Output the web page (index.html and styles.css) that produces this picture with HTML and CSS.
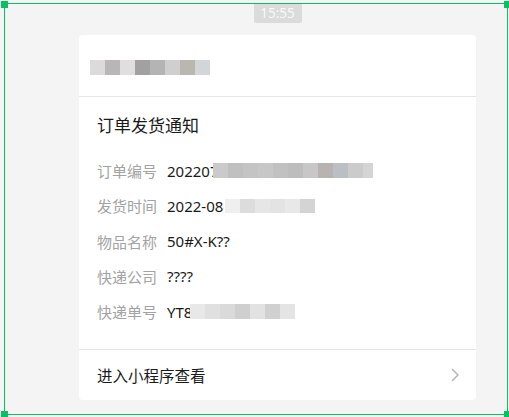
FILE: index.html
```html
<!DOCTYPE html>
<html lang="zh-CN">
<head>
    <meta charset="UTF-8">
    <title>订单发货通知</title>
    <meta name="viewport" content="width=device-width, initial-scale=1">
    <link rel="stylesheet" href="styles.css">
</head>
<body>
<div class="chat">
    <div class="time"><span>15:55</span></div>

    <div class="card">
        <div class="card-head">
            <span class="mosaic mosaic-name"></span>
        </div>
        <div class="card-body">
            <div class="title">订单发货通知</div>
            <div class="row">
                <span class="label">订单编号</span>
                <span class="value">202207</span><span class="mosaic mosaic-order"></span>
            </div>
            <div class="row">
                <span class="label">发货时间</span>
                <span class="value">2022-08</span><span class="mosaic mosaic-date"></span>
            </div>
            <div class="row">
                <span class="label">物品名称</span>
                <span class="value">50#X-K??</span>
            </div>
            <div class="row">
                <span class="label">快递公司</span>
                <span class="value">????</span>
            </div>
            <div class="row">
                <span class="label">快递单号</span>
                <span class="value">YT8</span><span class="mosaic mosaic-track"></span>
            </div>
        </div>
        <div class="card-foot">
            <span>进入小程序查看</span>
            <svg class="arrow" width="8" height="14" viewBox="0 0 8 14">
                <path d="M1 1 L7 7 L1 13" fill="none" stroke="#b5b5b5" stroke-width="1.5"/>
            </svg>
        </div>
    </div>
</div>

<!-- selection frame -->
<div class="frame">
    <i class="handle tl"></i>
    <i class="handle tr"></i>
    <i class="handle bl"></i>
    <i class="handle br"></i>
</div>
</body>
</html>
```

FILE: styles.css
```css
body { margin: 0; background: #f4f4f4; font-family: "Noto Sans", "Noto Sans CJK SC", sans-serif; color: #1a1a1a; }
.chat { width: 397px; margin-left: 79px; padding-top: 3px; }
.time { display: flex; justify-content: center; margin-bottom: 12px; }
.time span { background: #dbdbdb; color: #f8f8f8; font-size: 13.5px; line-height: 20px; width: 48px; text-align: center; border-radius: 2px; }

.card { background: #fff; border-radius: 4px; }
.card-head { height: 62px; box-sizing: border-box; padding: 4px 0 0 11px; display: flex; align-items: center; border-bottom: 1px solid #e6e6e6; }
.card-body { padding: 17px 18px 20px; border-bottom: 1px solid #e6e6e6; }
.title { font-size: 17px; line-height: 24px; margin-bottom: 15px; color: #1a1a1a; }
.row { display: flex; align-items: center; height: 35.25px; font-size: 15px; }
.label { width: 70px; color: #a3a3a3; flex: none; }
.value { color: #1a1a1a; }
.card-foot { height: 50px; display: flex; align-items: center; justify-content: space-between; padding: 0 17px 0 18px; font-size: 15.5px; color: #1a1a1a; }
.arrow { display: block; }

/* mosaic blocks hiding private data */
.mosaic { display: inline-block; height: 15px; }
.mosaic-name { width: 120px; background: linear-gradient(90deg, #dcdada 0 15px, #b7b7b7 15px 30px, #e0dede 30px 45px, #a1a1a1 45px 60px, #b3b5b3 60px 75px, #cfcfcf 75px 90px, #bab6b2 90px 105px, #d3d6d8 105px 120px); }
.mosaic-order { width: 160px; margin-left: -5px; background: linear-gradient(90deg, #cacaca 0 15px, #c0c0c0 15px 30px, #c4c4c4 30px 45px, #c7c7c7 45px 60px, #c1c1c1 60px 75px, #bdbdbd 75px 90px, #c7c7c7 90px 105px, #b8b2b0 105px 120px, #bbbec3 120px 135px, #cbcbcb 135px 150px, #d4d4d4 150px 160px); }
.mosaic-date { width: 90px; margin-left: 2px; height: 14px; background: linear-gradient(90deg, #efefef 0 15px, #dcdcdc 15px 30px, #e6e6e6 30px 45px, #e3e3e3 45px 60px, #e8e8e8 60px 75px, #d4d4d4 75px 90px); }
.mosaic-track { width: 105px; margin-left: -2px; background: linear-gradient(90deg, #e8e8e8 0 15px, #e0e0e0 15px 30px, #dadada 30px 45px, #cfcfcf 45px 60px, #e2e2e2 60px 75px, #d0d0d0 75px 90px, #e4e4e4 90px 105px); }

/* selection frame overlay */
.frame { position: absolute; left: 4px; top: 3px; width: 502px; height: 410px; border: 1px solid #07c160; }
.handle { position: absolute; width: 7px; height: 7px; background: #07c160; }
.tl { left: -4px; top: -3px; }
.tr { right: -4px; top: -3px; }
.bl { left: -4px; bottom: -4px; }
.br { right: -4px; bottom: -4px; }
```
